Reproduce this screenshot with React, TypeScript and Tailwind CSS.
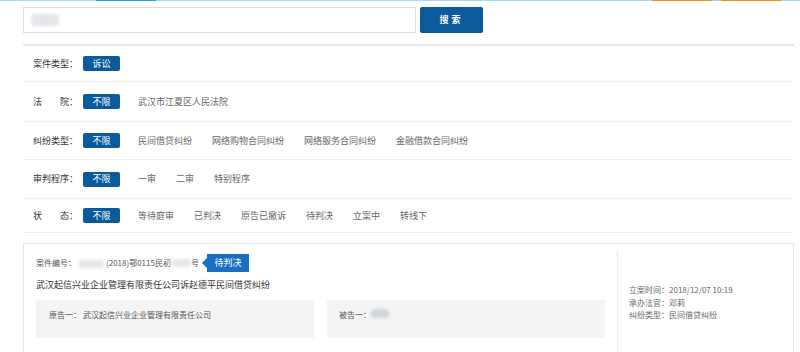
import React from "react";

const font = { fontFamily: '"Noto Sans CJK SC", "Noto Sans", sans-serif' };

function Blur({ w, h = 9, c = "bg-gray-300" }: { w: number; h?: number; c?: string }) {
  return (
    <span
      className={`inline-block ${c} blur-[1.5px] rounded-sm align-middle`}
      style={{ width: w, height: h }}
    />
  );
}

function Row({
  label,
  h,
  selected,
  options,
}: {
  label: React.ReactNode;
  h: string;
  selected: string;
  options: string[];
}) {
  return (
    <div className={`flex items-center border-b border-[#efefef] box-border ${h}`}>
      <div className="w-[60px] pl-[10px] text-[9px] text-[#333] flex">{label}</div>
      <div className="w-[37px] h-[15px] bg-[#0b5a9c] text-white text-[9px] rounded-[2px] flex items-center justify-center">
        {selected}
      </div>
      <div className="flex items-center gap-[20px] ml-[18px] text-[9px] text-[#666]">
        {options.map((o) => (
          <span key={o}>{o}</span>
        ))}
      </div>
    </div>
  );
}

export default function App() {
  return (
    <div className="w-[800px] h-[352px] bg-white overflow-hidden" style={font}>
      {/* top strip */}
      <div className="flex h-px">
        <div className="w-[96px] bg-[#a3dbf9]" />
        <div className="w-[60px] bg-[#1ea4ec]" />
        <div className="w-[496px] bg-[#a3dbf9]" />
        <div className="w-[60px] bg-[#f0900e]" />
        <div className="w-[9px] bg-[#a3dbf9]" />
        <div className="w-[60px] bg-[#f0900e]" />
        <div className="flex-1 bg-[#a3dbf9]" />
      </div>

      <div className="ml-[23px] w-[771px]">
        {/* search */}
        <div className="flex items-center gap-[4px] mt-[6px]">
          <div className="w-[393px] h-[26px] border border-[#dcdcdc] flex items-center pl-[7px]">
            <Blur w={28} h={12} c="bg-gray-200" />
          </div>
          <div className="w-[63px] h-[26px] bg-[#0b5a9c] rounded-[2px] text-white text-[9px] font-bold flex items-center justify-center tracking-[3px]">
            搜索
          </div>
        </div>

        <div className="mt-[11px] h-[2px] bg-[#e8e8e8]" />

        <Row label={<span>案件类型：</span>} h="h-[36px]" selected="诉讼" options={[]} />
        <Row
          label={
            <>
              <span>法</span>
              <span className="ml-[18px]">院：</span>
            </>
          }
          h="h-[40px]"
          selected="不限"
          options={["武汉市江夏区人民法院"]}
        />
        <Row
          label={<span>纠纷类型：</span>}
          h="h-[38px]"
          selected="不限"
          options={["民间借贷纠纷", "网络购物合同纠纷", "网络服务合同纠纷", "金融借款合同纠纷"]}
        />
        <Row
          label={<span>审判程序：</span>}
          h="h-[39px]"
          selected="不限"
          options={["一审", "二审", "特别程序"]}
        />
        <Row
          label={
            <>
              <span>状</span>
              <span className="ml-[18px]">态：</span>
            </>
          }
          h="h-[34px]"
          selected="不限"
          options={["等待庭审", "已判决", "原告已撤诉", "待判决", "立案中", "转线下"]}
        />

        {/* card */}
        <div className="mt-[10px] border border-[#e6e6e6] w-[771px] h-[120px] flex">
          <div className="w-[593px] pl-[12px] pr-[12px]">
            <div className="mt-[10px] h-[18px] flex items-center text-[8px] text-[#555]">
              <span>案件编号：</span>
              <span className="ml-[2px]">
                <Blur w={26} h={8} c="bg-gray-200" />
              </span>
              <span className="ml-[2px]">(2018)鄂0115民初</span>
              <Blur w={20} h={8} c="bg-gray-200" />
              <span>号</span>
              <div className="ml-[3px] flex items-center">
                <div className="w-0 h-0 border-y-[5px] border-y-transparent border-r-[5px] border-r-[#1a70c0]" />
                <div className="w-[42px] h-[18px] bg-[#1a70c0] text-white text-[9px] flex items-center justify-center">
                  待判决
                </div>
              </div>
            </div>
            <div className="mt-[6px] text-[9px] text-[#333] leading-[14px]">
              武汉起信兴业企业管理有限责任公司诉赵德平民间借贷纠纷
            </div>
            <div className="mt-[8px] flex gap-[13px]">
              <div className="w-[278px] h-[38px] bg-[#f4f4f4] flex items-start pt-[9px] pl-[13px] text-[8px] text-[#555]">
                <span>原告一：</span>
                <span className="ml-[2px]">武汉起信兴业企业管理有限责任公司</span>
              </div>
              <div className="w-[278px] h-[38px] bg-[#f4f4f4] flex items-start pt-[9px] pl-[12px] text-[8px] text-[#555]">
                <span>被告一：</span>
                <Blur w={18} h={9} c="bg-gray-300" />
              </div>
            </div>
          </div>
          <div className="mt-[6px] mb-[-20px] border-l border-[#ececec] flex-1 pl-[11px] pt-[34px] text-[8px] text-[#666] leading-[12.5px]">
            <div>立案时间：2018/12/07 10:19</div>
            <div>承办法官：邓莉</div>
            <div>纠纷类型：民间借贷纠纷</div>
          </div>
        </div>
      </div>
    </div>
  );
}
